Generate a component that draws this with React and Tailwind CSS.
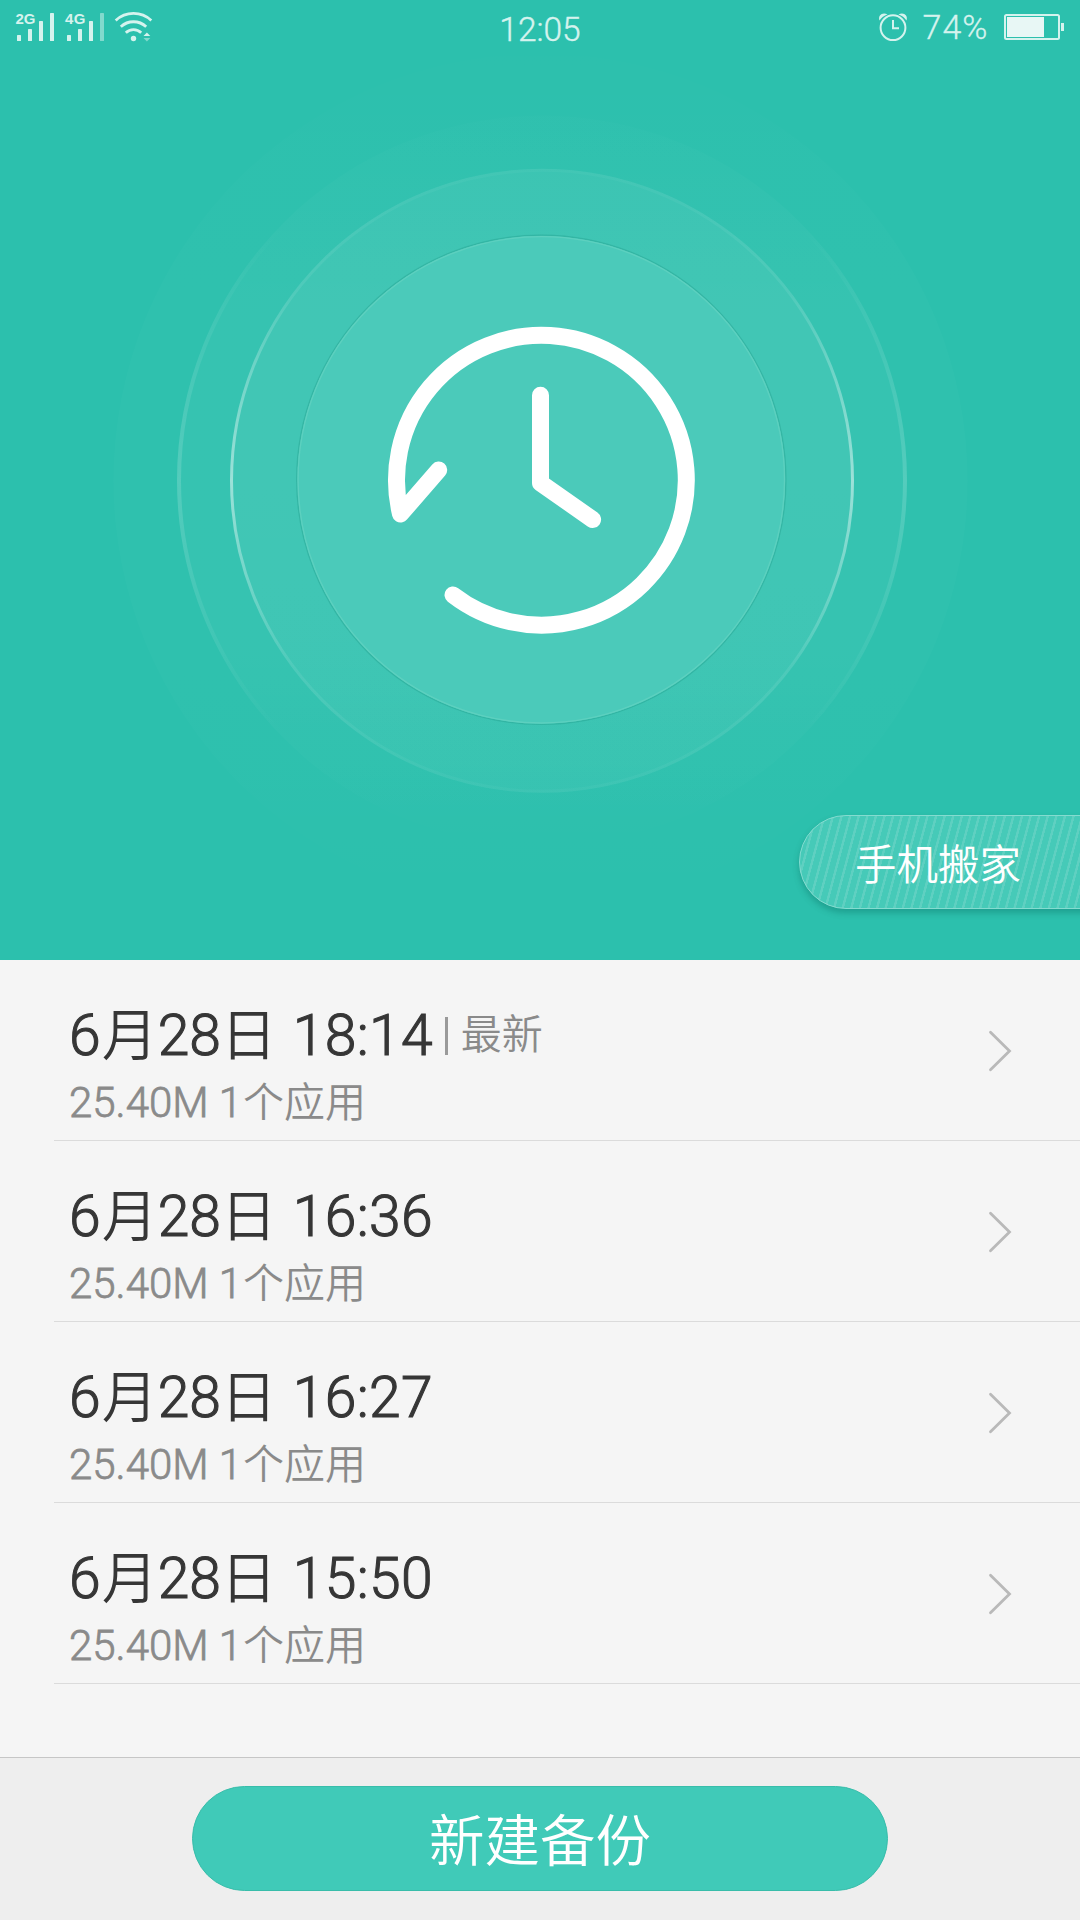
const backups = [
  { date: ['6', '月', '28', '日'], time: '18:14', latest: true },
  { date: ['6', '月', '28', '日'], time: '16:36' },
  { date: ['6', '月', '28', '日'], time: '16:27' },
  { date: ['6', '月', '28', '日'], time: '15:50' },
];

function StatusBar() {
  return (
    <div className="flex h-[56px] items-start justify-between text-[#d5f3ee]">
      <div className="w-[360px]">
        <svg className="block h-[56px] w-[180px]" viewBox="0 0 180 56" fill="#d5f3ee">
          <text x="15.5" y="24" fontSize="15" fontWeight="700" fontFamily="Liberation Sans, sans-serif" textLength="20">2G</text>
          <rect x="17" y="35" width="4" height="6" rx=".6" />
          <rect x="28" y="29" width="4" height="12" rx=".6" />
          <rect x="39" y="21" width="4" height="20" rx=".6" />
          <rect x="50" y="13" width="4" height="28" rx=".6" />
          <text x="65" y="24" fontSize="15" fontWeight="700" fontFamily="Liberation Sans, sans-serif" textLength="20.5">4G</text>
          <rect x="67" y="35" width="4" height="6" rx=".6" />
          <rect x="78" y="29" width="4" height="12" rx=".6" />
          <rect x="89" y="21" width="4" height="20" rx=".6" />
          <rect x="100" y="13" width="4" height="28" rx=".6" opacity=".5" />
          <g fill="none" stroke="#d5f3ee" strokeWidth="2.8">
            <path d="M115.700 20.500A26 26 0 0 1 151.300 20.500" />
            <path d="M120.800 26.800A18.500 18.500 0 0 1 146.200 26.800" />
            <path d="M125.800 32.800A11 11 0 0 1 141.200 32.800" />
          </g>
          <circle cx="133.500" cy="38.500" r="2.700" />
          <path d="M143.500 36L146.900 32.500L150.300 36Z" />
          <path d="M143.500 38L146.900 41.500L150.300 38Z" opacity=".5" />
        </svg>
      </div>
      <div className="pt-[12px] font-['Roboto',sans-serif] text-[33.500px] leading-[36px] font-light [-webkit-text-stroke:0.400px_#d5f3ee]">12:05</div>
      <div className="flex w-[360px] justify-end">
        <svg className="block h-[56px] w-[220px]" viewBox="0 0 220 56" fill="none" stroke="#d5f3ee">
          <circle cx="33" cy="27.700" r="12.400" strokeWidth="2" />
          <path d="M33 20V28.200H39" strokeWidth="2" />
          <path d="M19.500 20.500C17.500 15 23 11.500 27.500 14.500C24 15.500 21.500 17.500 19.500 20.500ZM46.500 20.500C48.500 15 43 11.500 38.500 14.500C42 15.500 44.500 17.500 46.500 20.500Z" fill="#d5f3ee" stroke="none" />
          <text x="62.500" y="39.200" fill="#d5f3ee" strokeWidth=".3" fontSize="34" fontWeight="300" fontFamily="Roboto, sans-serif" textLength="65">74%</text>
          <rect x="145" y="15" width="54" height="24" rx="1.500" strokeWidth="2" />
          <rect x="147" y="17" width="37" height="20" fill="#e8f7f5" stroke="none" />
          <rect x="201" y="23" width="3" height="8" fill="#d5f3ee" stroke="none" />
        </svg>
      </div>
    </div>
  );
}

function HistoryDial() {
  return (
    <svg className="block h-[864px] w-[1080px]" viewBox="0 56 1080 864" fill="none">
      <defs>
        <linearGradient id="disc" x1="0" y1="0" x2="0" y2="1">
          <stop offset="0" stopColor="#fff" stopOpacity=".01" />
          <stop offset=".28" stopColor="#fff" stopOpacity=".04" />
          <stop offset=".72" stopColor="#fff" stopOpacity=".04" />
          <stop offset="1" stopColor="#fff" stopOpacity="0" />
        </linearGradient>
        <linearGradient id="mid" x1="0" y1="0" x2="0" y2="1">
          <stop offset="0" stopColor="#fff" stopOpacity=".055" />
          <stop offset=".5" stopColor="#fff" stopOpacity=".055" />
          <stop offset="1" stopColor="#fff" stopOpacity=".04" />
        </linearGradient>
        <linearGradient id="rim" x1="0" y1="0" x2="0" y2="1">
          <stop offset="0" stopColor="#fff" stopOpacity=".03" />
          <stop offset=".2" stopColor="#fff" stopOpacity=".08" />
          <stop offset=".5" stopColor="#fff" stopOpacity=".48" />
          <stop offset=".8" stopColor="#fff" stopOpacity=".08" />
          <stop offset="1" stopColor="#fff" stopOpacity=".03" />
        </linearGradient>
        <linearGradient id="outerRim" x1="0" y1="0" x2="0" y2="1">
          <stop offset=".15" stopColor="#fff" stopOpacity="0" />
          <stop offset=".5" stopColor="#fff" stopOpacity=".15" />
          <stop offset=".85" stopColor="#fff" stopOpacity="0" />
        </linearGradient>
      </defs>
      <circle cx="540.500" cy="480.500" r="427" fill="url(#disc)" opacity=".4" />
      <circle cx="542" cy="480.500" r="365" fill="url(#disc)" opacity=".9" />
      <circle cx="542" cy="480.500" r="363" stroke="url(#outerRim)" strokeWidth="4" />
      <circle cx="542" cy="480.800" r="312" fill="url(#mid)" />
      <circle cx="542" cy="480.800" r="310.500" stroke="url(#rim)" strokeWidth="3" />
      <circle cx="541.300" cy="479.800" r="244.500" stroke="#239d8d" strokeOpacity=".4" strokeWidth="1.500" />
      <circle cx="541.300" cy="479.800" r="244" fill="#4bcaba" />
      <circle cx="541.300" cy="479.800" r="243.200" stroke="#5dd0bf" strokeWidth="1.300" />
      <g stroke="#fff" strokeWidth="17" strokeLinecap="round" strokeLinejoin="round">
        <path d="M453 595A144.900 144.900 0 1 0 400.500 514L438.700 470" />
        <path d="M540.500 395.300V483L592.600 519.500" />
      </g>
    </svg>
  );
}

function BackupRow({ backup }) {
  const [month, monthUnit, day, dayUnit] = backup.date;
  return (
    <div className="ml-[54px] flex h-[181px] justify-between border-b border-[#dbdbdb] pl-[15px]">
      <div className="pt-[44px]">
        <div className="flex h-[64px] items-center whitespace-nowrap text-[#363636]">
          <span className="flex items-center font-['Roboto',sans-serif] text-[57px] leading-[64px] font-light">
            <span className="[-webkit-text-stroke:1.100px_#363636]">{month}</span>
            <span className="mb-[10px] ml-[1px] font-['Noto_Sans_CJK_SC',sans-serif] text-[56px] font-[350]">{monthUnit}</span>
            <span className="[-webkit-text-stroke:1.100px_#363636]">{day}</span>
            <span className="mb-[10px] font-['Noto_Sans_CJK_SC',sans-serif] text-[56px] font-[350]">{dayUnit}</span>
            <span className="ml-[16px] tracking-[0.300px] [-webkit-text-stroke:1.100px_#363636]">{backup.time}</span>
          </span>
          {backup.latest && (
            <span className="flex items-center text-[#8a8a8a]">
              <span className="ml-[12px] h-[38px] w-[3px] bg-[#9a9a9a]" />
              <span className="mb-[10px] ml-[13px] font-['Noto_Sans_CJK_SC',sans-serif] text-[41px] leading-[60px] font-[350]">最新</span>
            </span>
          )}
        </div>
        <div className="flex h-[70px] items-center font-['Roboto',sans-serif] text-[42px] leading-[60px] font-light text-[#8a8a8a]">
          <span className="[-webkit-text-stroke:0.800px_#8a8a8a]">25.40M 1</span>
          <span className="mb-[9px] ml-[1px] font-['Noto_Sans_CJK_SC',sans-serif] text-[41px] font-[350]">个应用</span>
        </div>
      </div>
      <svg className="mt-[70px] mr-[68px] h-[42px] w-[24px]" viewBox="0 0 24 42" fill="none" stroke="#b9b9b9" strokeWidth="2.800" strokeLinecap="round">
        <path d="M2.500 2.300L21.500 21L2.500 39.700" />
      </svg>
    </div>
  );
}

export default function App() {
  return (
    <div className="flex h-[1920px] w-[1080px] flex-col overflow-hidden bg-[#f5f5f5]">
      <header className="relative h-[960px] shrink-0 overflow-hidden bg-[#2cc0ad]">
        <StatusBar />
        <HistoryDial />
        <button className="absolute top-[815px] left-[799px] h-[94px] w-[300px] rounded-l-full border border-[#84dcd0] bg-[#46cab8] bg-[repeating-linear-gradient(105deg,transparent_0px,transparent_5.500px,#5fd0c1_6px,#5fd0c1_8px,transparent_8.300px)] pl-[55px] text-left font-['Noto_Sans_CJK_SC',sans-serif] text-[41.500px] leading-[90px] font-[350] text-white shadow-[0_4px_6px_rgba(0,90,80,0.3)]">
          手机搬家
        </button>
      </header>
      <main className="h-[797px] shrink-0">
        {backups.map((b) => (
          <BackupRow key={b.time} backup={b} />
        ))}
      </main>
      <footer className="flex h-[163px] shrink-0 justify-center border-t border-[#c6c6c6] bg-[#eeeeee] pt-[28px]">
        <button className="h-[105px] w-[696px] rounded-full border border-[#38bdaa] bg-[#40cab8] pb-[3px] font-['Noto_Sans_CJK_SC',sans-serif] text-[55.500px] leading-[99px] font-[350] text-white">
          新建备份
        </button>
      </footer>
    </div>
  );
}
